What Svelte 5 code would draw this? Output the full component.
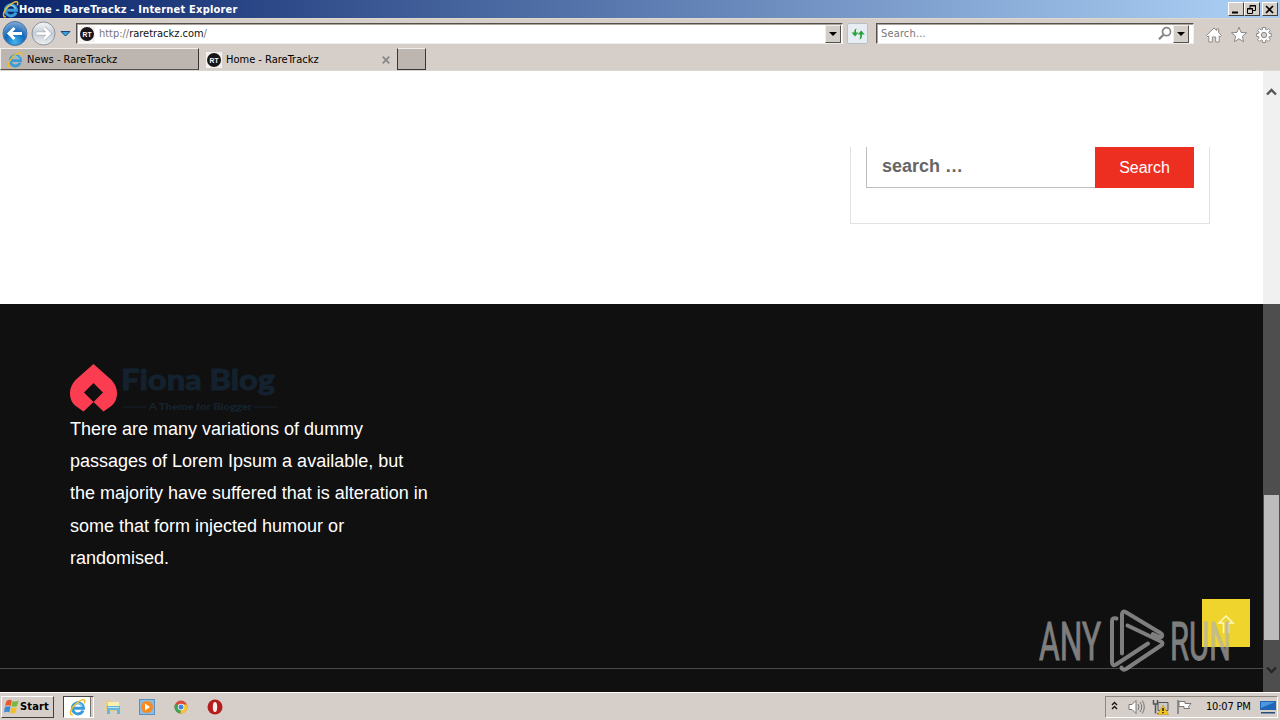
<script lang="ts">
  type Tab = { title: string; active: boolean }

  const TABS: Tab[] = [
    { title: 'News - RareTrackz', active: false },
    { title: 'Home - RareTrackz', active: true },
  ]

  const ABOUT = [
    'There are many variations of dummy',
    'passages of Lorem Ipsum a available, but',
    'the majority have suffered that is alteration in',
    'some that form injected humour or',
    'randomised.',
  ]
</script>

{#snippet ieIcon(size: number)}
  <svg width={size} height={size} viewBox="0 0 16 16" fill="none">
    <path d="M13.2 10.8A5.2 5.2 0 1 1 13.6 8.6H4.8" stroke="#399bd9" stroke-width="2.8" />
    <path d="M12.5 7.3A4.4 4.4 0 0 0 4.5 6.5" stroke="#8bd7f5" stroke-width="1" />
    <path d="M3.6 14.7C.8 15.8.6 12 3.4 7.8 6.8 2.9 13.7-.8 14.7 1.4c.4.8.1 1.7-.5 2.7" stroke="#edbd2b" stroke-width="1.4" />
  </svg>
{/snippet}

{#snippet rtIcon()}
  <svg width="16" height="16" viewBox="0 0 16 16">
    <rect width="16" height="16" fill="#f5f1ef" />
    <circle cx="8" cy="8" r="7" fill="#17151a" />
    <text x="3.6" y="10.7" textLength="9" lengthAdjust="spacingAndGlyphs" font-family="Liberation Sans, sans-serif" font-size="7.5" font-weight="700" fill="#fff">RT</text>
  </svg>
{/snippet}

{#snippet dropArrow()}
  <button class="drop" aria-label="Show list"><svg width="8" height="4" viewBox="0 0 8 4"><path d="M0 0h8L4 4z" fill="#000" /></svg></button>
{/snippet}

<div class="desktop">
  <header class="titlebar">
    {@render ieIcon(17)}
    <span class="title">Home - RareTrackz - Internet Explorer</span>
    <div class="controls">
      <button aria-label="Minimize"><svg width="13" height="11"><path d="M3 8.5h6" stroke="#000" stroke-width="2" /></svg></button>
      <button aria-label="Restore"><svg width="13" height="11" fill="none" stroke="#000"><path d="M5 4V1.5h5.5v5H8M5 2h6M2.5 4.5h5v5h-5zM2 5h6" /></svg></button>
      <button class="shut" aria-label="Close"><svg width="13" height="11"><path d="M3 2l7 7M10 2L3 9" stroke="#000" stroke-width="1.7" /></svg></button>
    </div>
  </header>

  <div class="toolbar">
    <svg class="nav" width="74" height="30" viewBox="0 0 74 30">
      <defs>
        <radialGradient id="back" cx=".5" cy=".85" r=".85"><stop stop-color="#43b6ec" /><stop offset=".5" stop-color="#1267bb" /><stop offset="1" stop-color="#86add5" /></radialGradient>
        <linearGradient id="fwd" x2="0" y2="1"><stop stop-color="#f6f7f9" /><stop offset=".5" stop-color="#c3cbd3" /><stop offset="1" stop-color="#eef2f5" /></linearGradient>
      </defs>
      <circle cx="15" cy="14.5" r="12" fill="url(#back)" stroke="#51749d" />
      <path d="M22 14.5H9M14.500 9L9 14.500l5.500 5.500" fill="none" stroke="#fff" stroke-width="3" />
      <circle cx="43.500" cy="14.500" r="11.500" fill="url(#fwd)" stroke="#8d9299" />
      <path d="M36.500 14.500h13M44 9l5.500 5.500L44 20" fill="none" stroke="#a8b0b8" stroke-width="4" />
      <path d="M36.500 14.500h13M44 9l5.500 5.500L44 20" fill="none" stroke="#fff" stroke-width="2.600" />
      <path d="M61 12.500h9L65.500 17z" fill="#38a2dd" stroke="#16487d" />
    </svg>
    <div class="field address">
      {@render rtIcon()}
      <span class="url">http://<b>raretrackz.com</b>/</span>
      {@render dropArrow()}
    </div>
    <button class="refresh" aria-label="Refresh">
      <svg width="16" height="16" viewBox="0 0 16 16" fill="#27a33b"><path d="M6.500 2.500Q4 3 4.200 6.500H1.500L5 10.500l3.500-4H6Q5.800 4 6.500 2.500zM9.500 13.500q2.700-.5 2.500-5h2.700l-3.500-4-3.500 4h2.500q.2 3-.7 5z" /></svg>
    </button>
    <div class="field finder">
      <span class="hint">Search...</span>
      <svg class="glass" width="16" height="16" viewBox="0 0 16 16" fill="none" stroke="#858585"><circle cx="9.500" cy="5.700" r="4" stroke-width="1.700" /><path d="M6.500 8.700L2 13.300" stroke-width="2.200" /></svg>
      {@render dropArrow()}
    </div>
    <div class="tools">
      <svg width="18" height="18" viewBox="0 0 18 18" fill="#fff" stroke="#8b8b8b"><path d="M1.500 9.500L9 2l2.500 2.500V3h2.200v3.700l2.800 2.800-1.300 1.300-1-1V16h-3.500v-5H7.300v5H3.800V9.800l-1 1z" /></svg>
      <svg width="18" height="18" viewBox="0 0 18 18" fill="#fff" stroke="#8b8b8b"><path d="M9 1.200l2 5.200 5.600.3-4.300 3.600 1.400 5.500L9 12.800l-4.700 3 1.400-5.500-4.300-3.600 5.600-.3z" /></svg>
      <svg width="18" height="18" viewBox="0 0 18 18" fill="#fff" stroke="#8b8b8b"><path d="M7.500 1.500h3v2l1.200.5 1.500-1.500 2.100 2.100-1.500 1.600.5 1.300h2v3h-2l-.5 1.300 1.500 1.600-2.100 2.100-1.600-1.500-1.100.5v2h-3v-2L6.300 14l-1.600 1.500-2.100-2.100 1.500-1.600-.5-1.300h-2v-3h2l.5-1.300-1.500-1.600 2.100-2.100L6.300 4l1.200-.5z" /><circle cx="9" cy="9" r="2.700" fill="#d4ceca" /></svg>
    </div>
  </div>

  <nav class="tabs">
    {#each TABS as tab}
      <div class="tab" class:active={tab.active}>
        {#if tab.active}{@render rtIcon()}{:else}{@render ieIcon(16)}{/if}
        <span>{tab.title}</span>
        {#if tab.active}
          <svg class="x" width="8" height="8" viewBox="0 0 8 8"><path d="M.7.7l6.600 6.600M7.300.7L.7 7.300" stroke="#888" stroke-width="1.700" /></svg>
        {/if}
      </div>
    {/each}
    <div class="newtab"></div>
  </nav>

  <main class="page">
    <section class="content">
      <div class="widget">
        <div class="searchbox">
          <span>search …</span>
          <button>Search</button>
        </div>
      </div>
    </section>

    <footer class="footer">
      <div class="about">
        <svg class="logo" width="210" height="49" viewBox="0 0 210 49">
          <path d="M23.500 0L41.500 16C45 20 47 24 47 29c0 6-2 9.500-5 12.500l-8.500 6-10-9.500-10 9.500L5 41.500C2 38.500 0 35 0 29c0-5 2-9 5.500-13z" fill="#fc3c50" />
          <path d="M23.500 19l9.500 9.500-9.500 9.500-9.500-9.500z" fill="#101010" />
          <text x="51" y="26" textLength="154" lengthAdjust="spacingAndGlyphs" class="brand">Fiona Blog</text>
          <path d="M53 43h23M184 43h23" stroke="#17232d" />
          <text x="79" y="46" textLength="103" lengthAdjust="spacingAndGlyphs" class="tagline">A Theme for Blogger</text>
        </svg>
        <p>{#each ABOUT as line}{line}<br />{/each}</p>
      </div>
      <div class="rule"></div>
    </footer>

    <button class="totop" aria-label="Back to top">
      <svg width="20" height="20" viewBox="0 0 20 20" fill="none" stroke="#fff6ba" stroke-width="1.500"><path d="M7.500 18V8H3l7-7 7 7h-4.500v10" /></svg>
    </button>

    <svg class="watermark" width="200" height="66" viewBox="0 0 200 66">
      <text x="1" y="50.500" textLength="62" lengthAdjust="spacingAndGlyphs">ANY</text>
      <text x="132" y="50.500" textLength="61" lengthAdjust="spacingAndGlyphs">RUN</text>
      <g fill="none" stroke="#b2b2b2" stroke-width="4" stroke-linejoin="round" stroke-linecap="round">
        <path d="M78.500 9.500c-3-1-4.500 0-4.500 3V53c0 3 2 4 4 2.500l32-21" />
        <path d="M84 44.500V5.500c0-2.500 1.500-3.500 3.500-2.500l35 21c3 2 1.500 5-1.500 4l-6-3" />
        <path d="M89.500 16.500L123 32.500c2 1 2 3 0 4L88 60c-2 1-4 1-4.500-1.500" />
      </g>
    </svg>

    <div class="scrollbar">
      <svg class="up" width="11" height="8" viewBox="0 0 11 8"><path d="M1 6.500l4.500-4.500L10 6.500" fill="none" stroke="#555" stroke-width="2.300" /></svg>
      <div class="thumb"></div>
      <svg class="down" width="11" height="8" viewBox="0 0 11 8"><path d="M1 1.500l4.500 4.500L10 1.500" fill="none" stroke="#252525" stroke-width="2.300" /></svg>
    </div>
  </main>

  <div class="taskbar">
    <button class="start">
      <svg width="16" height="16" viewBox="0 0 16 16"><path d="M2.500 2q3-2 5.300-.5L6.700 7Q4 5.500 1 7z" fill="#e95a2b" /><path d="M8.600 2q3 1.300 6-.5l-1.500 5.500Q10 8.500 7.500 7.300z" fill="#79b93b" /><path d="M.9 8q3-1.500 5.600-.2L5.300 13.500Q3 12 0 13.500z" fill="#3b8bd4" /><path d="M7.300 8.300q2.600 1.300 5.600 0l-1.500 5.500q-3 1.500-5.200 0z" fill="#f4bd2c" /></svg>
      <span>Start</span>
    </button>
    <div class="running"><div class="face">{@render ieIcon(17)}</div></div>
    <div class="quick">
      <svg width="16" height="16" viewBox="0 0 16 16"><path d="M1 2h5l1 1.500h6V12H1z" fill="#e8ce78" /><path d="M3 3h11v7H3z" fill="#faefad" /><path d="M2 7h13v8h-3v-4H5v4H2z" fill="#65b6dc" /><path d="M3 8h11v1H3z" fill="#b9e5f5" /></svg>
      <svg width="16" height="16" viewBox="0 0 16 16"><rect x=".5" y=".5" width="15" height="15" fill="#8cbce3" stroke="#5c91bf" /><circle cx="8" cy="8" r="6" fill="#f68c20" /><path d="M6 4.500L11 8l-5 3.500z" fill="#fff" /></svg>
      <svg width="16" height="16" viewBox="0 0 16 16"><circle cx="8" cy="8" r="6.500" fill="#dc4937" /><path d="M8 8L2.300 4.800A6.500 6.500 0 0 0 7.500 14.500z" fill="#3aa757" /><path d="M8 8L7.500 14.500A6.500 6.500 0 0 0 14 5.500H8z" fill="#f5c735" /><circle cx="8" cy="8" r="3.200" fill="#fff" /><circle cx="8" cy="8" r="2.500" fill="#4285d4" /></svg>
      <svg width="16" height="16" viewBox="0 0 16 16"><circle cx="8" cy="8" r="7.500" fill="#b51d1d" /><ellipse cx="8" cy="8" rx="2.200" ry="5" fill="#f8eeee" /></svg>
    </div>
    <div class="tray">
      <svg class="more" width="7" height="9" viewBox="0 0 7 9" fill="none" stroke="#111" stroke-width="1.300"><path d="M1 4l2.500-2.500L6 4M1 8l2.500-2.500L6 8" /></svg>
      <svg class="speaker" width="17" height="16" viewBox="0 0 17 16" fill="none" stroke="#777"><path d="M1 5.500h3l4-4v13l-4-4H1z" fill="#fff" /><path d="M10 5q2 3 0 6M12 3q3.500 5 0 10M14.300 1.500q4 6.500 0 13" /></svg>
      <svg class="net" width="17" height="16" viewBox="0 0 17 16"><path d="M1.500 1v4h4V1M3.500 5v9.500" fill="none" stroke="#555" stroke-width="1.500" /><path d="M6 3.500h10v8H6zM5 14.500h8" fill="#cacaca" stroke="#555" /><path d="M11 6l5.500 9.500h-11z" fill="#f4c51c" stroke="#b88b12" stroke-width=".5" /><path d="M11 9v3M11 13v1.300" stroke="#000" stroke-width="1.300" /></svg>
      <svg class="flag" width="17" height="16" viewBox="0 0 17 16"><path d="M2 1v14" stroke="#777" stroke-width="1.500" /><path d="M3 2.500h6v2h6l-2.500 3 1 2H8v-2H3z" fill="#fff" stroke="#777" /></svg>
      <span class="clock">10:07 PM</span>
      <svg width="16" height="14" viewBox="0 0 16 14"><path d="M0 1h16v9H0z" fill="#1f66b7" /><path d="M1 2h14L1 8z" fill="#4c97dd" /><path d="M1 12h14v1.500H1z" fill="#244d7d" /></svg>
    </div>
  </div>
</div>

<style>
  :global(body) {
    overflow: hidden;
  }
  .desktop {
    display: grid;
    grid-template-rows: 18px 30px 23px 621px 28px;
    width: 1280px;
    height: 720px;
    background: #d5cec9;
    font: 11px/14px 'DejaVu Sans Condensed', 'DejaVu Sans', sans-serif;
    font-stretch: condensed;
    color: #000;
  }
  svg { display: block; flex: none; }
  button { font: inherit; padding: 0; border: 0; border-radius: 0; box-sizing: border-box; }

  .titlebar {
    display: flex;
    align-items: center;
    padding: 0 2px;
    background: linear-gradient(90deg, #0a246a 0%, #a6caf0 95%);
    color: #fff;
  }
  .title { padding-top: 1px; font-weight: 700; letter-spacing: 0.2px; white-space: nowrap; }
  .controls { display: flex; margin-left: auto; }
  .controls button {
    width: 16px;
    height: 14px;
    background: #d5cfc8;
    border: 1px solid;
    border-color: #fff #404040 #404040 #fff;
  }
  .controls .shut { margin-left: 2px; }

  .toolbar { display: flex; align-items: center; border-top: 1px solid #ddd8ce; box-sizing: border-box; }
  .field {
    display: flex;
    align-items: center;
    height: 21px;
    box-sizing: border-box;
    background: #fff;
    border: 1px solid;
    border-color: #55504b #eee #eee #55504b;
    box-shadow: inset 1px 1px #aaa39b;
  }
  .address { width: 767px; margin-left: 2px; padding: 0 1px 0 2px; }
  .url { padding-top: 1px; margin-left: 4px; color: #777; letter-spacing: -0.02px; }
  .url b { color: #111; font-weight: 400; }
  .drop {
    display: grid;
    place-items: center;
    width: 16px;
    height: 18px;
    margin-left: auto;
    background: #d2cdc7;
    border: 1px solid;
    border-color: #eee #55504b #55504b #eee;
  }
  .refresh {
    display: grid;
    place-items: center;
    width: 21px;
    height: 21px;
    margin: 0 8px 0 4px;
    background: #e8edf3;
    border: 1px solid #b8bfc7;
    border-radius: 2px;
  }
  .finder { width: 318px; padding: 0 4px; }
  .hint { padding-top: 1px; color: #777; letter-spacing: 0.15px; }
  .glass { margin-left: auto; }
  .finder .drop { margin-left: 0; }
  .tools { display: flex; gap: 7px; margin: 3px 7px 0 auto; }

  .tabs { display: flex; border-bottom: 1px solid #dcd6d0; box-sizing: border-box; }
  .tab {
    display: flex;
    align-items: center;
    gap: 4px;
    width: 199px;
    height: 22px;
    padding: 2px 6px 0;
    box-sizing: border-box;
    background: #bdb5af;
    border: 1px solid;
    border-color: #f3efeb #373431 #55504b #f3efeb;
    letter-spacing: 0;
  }
  .tab.active { width: 198px; border-color: transparent; background: #d5cec9; }
  .x { margin-left: auto; }
  .newtab { width: 29px; background: #bdb5af; border: 1px solid #393633; border-top-color: #eee; box-sizing: border-box; }

  .page {
    position: relative;
    overflow: hidden;
    background: #fff;
    font-family: 'Liberation Sans', Arial, sans-serif;
  }
  .content { height: 233px; padding: 76px 70px 0 850px; box-sizing: border-box; }
  .widget { height: 77px; padding: 0 15px; border: 1px solid #e2e2e2; border-top: 0; box-sizing: border-box; }
  .searchbox { display: flex; width: 328px; height: 41px; }
  .searchbox span {
    flex: 1;
    padding-left: 15px;
    border: 1px solid #bdbdbd;
    border-top: 0;
    border-right: 0;
    color: #666;
    font-size: 18px;
    font-weight: 700;
    line-height: 38px;
  }
  .searchbox button { width: 99px; background: #ed2f21; color: #fff; font-size: 16px; }

  .footer { display: flex; flex-direction: column; height: 388px; background: #101010; }
  .about { padding: 60px 70px 0; height: 364px; box-sizing: border-box; }
  .logo { overflow: visible; }
  .brand { font: 900 29px Lato, sans-serif; fill: #14222f; stroke: #14222f; stroke-width: 0.8px; }
  .tagline { font: 900 10px Lato, sans-serif; fill: #16232d; }
  .about p { margin: 0; color: #fff; font-size: 18px; line-height: 32.2px; white-space: nowrap; }
  .rule { height: 1px; background: #4a4a4a; }

  .totop {
    position: absolute;
    left: 1202px;
    top: 528px;
    display: grid;
    place-items: center;
    width: 48px;
    height: 48px;
    padding-top: 4px;
    background: #f0d42e;
  }
  .watermark { position: absolute; left: 1038px; top: 538px; overflow: visible; opacity: 0.68; }
  .watermark text { font: 400 53px Roboto, sans-serif; fill: #b2b2b2; stroke: #b2b2b2; stroke-width: 1px; }

  .scrollbar {
    position: absolute;
    right: 0;
    top: 0;
    display: flex;
    flex-direction: column;
    width: 17px;
    height: 100%;
    background: linear-gradient(#f0f0f0 233px, #4e4e4e 233px);
  }
  .up { margin: 17px 3px 0; }
  .thumb { height: 145px; margin: 399px 1px 0; background: #bcbcbc; }
  .down { margin: 26px 3px 0; }

  .taskbar {
    display: flex;
    align-items: center;
    padding: 1px 2px 0 1px;
    border-top: 1px solid #fff;
    box-sizing: border-box;
  }
  .start {
    display: flex;
    align-items: center;
    width: 53px;
    height: 22px;
    padding-left: 2px;
    background: #d5cec9;
    border: 1px solid;
    border-color: #fff #404040 #404040 #fff;
    font-weight: 700;
    letter-spacing: 0.15px;
  }
  .running { width: 31px; height: 22px; margin-left: 9px; border: 1px solid; border-color: #444 #fff #fff #444; box-sizing: border-box; display: flex; }
  .face { width: 26px; background: #fff; border-right: 1px solid #77716b; display: grid; place-items: center; }
  .quick { display: flex; gap: 18px; margin-left: 11px; }
  .tray {
    display: flex;
    align-items: center;
    width: 173px;
    height: 22px;
    margin-left: auto;
    padding: 0 0 0 5px;
    border: 1px solid;
    border-color: #8d8780 #fff #fff #8d8780;
    box-sizing: border-box;
  }
  .more { margin-bottom: 3px; }
  .speaker { margin-left: 10px; }
  .net { margin-left: 7px; }
  .flag { margin-left: 7px; }
  .clock { width: 46px; margin: 0 8px 0 13px; letter-spacing: -0.2px; white-space: nowrap; }
</style>
